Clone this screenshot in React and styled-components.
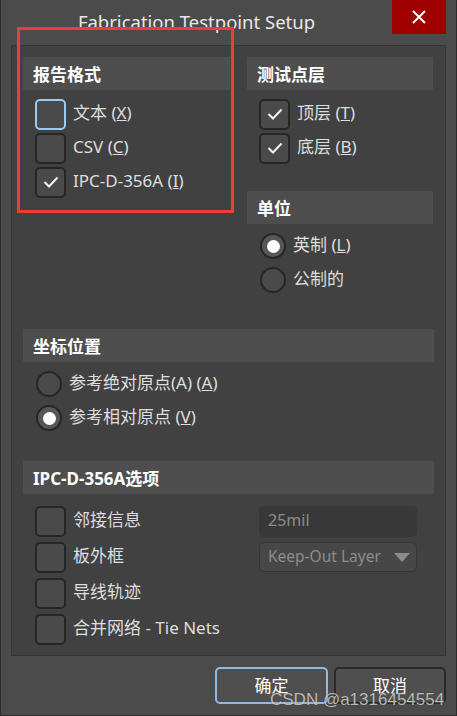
import styled, { createGlobalStyle } from "styled-components";

const GlobalStyle = createGlobalStyle`
  html, body {
    margin: 0;
    padding: 0;
    background: #4b4b4b;
  }
  body {
    font-family: "Noto Sans", "Noto Sans CJK SC", sans-serif;
  }
`;

const Window = styled.div`
  position: relative;
  width: 457px;
  height: 716px;
  box-sizing: border-box;
  background: #4b4b4b;
  border: 1px solid #2c2c2c;
  border-top: none;
  display: flex;
  flex-direction: column;
  overflow: hidden;
`;

const TitleBar = styled.div`
  height: 45px;
  display: flex;
  align-items: flex-start;
  padding-right: 10px;
`;

const Title = styled.div`
  flex: 1;
  text-align: center;
  color: #e8e8e8;
  font-size: 18.5px;
  line-height: 1;
  padding-top: 13px;
`;

const CloseButton = styled.div`
  width: 54px;
  height: 34px;
  background: #a00000;
  display: flex;
  align-items: center;
  justify-content: center;
`;

const Panel = styled.div`
  margin: 0 10px;
  height: 611px;
  box-sizing: border-box;
  background: #414141;
  border: 1px solid #363636;
  padding: 11px 11px 0;
  overflow: hidden;
`;

const TopGrid = styled.div`
  display: grid;
  grid-template-columns: 207px 186px;
  column-gap: 17px;
  align-items: start;
`;

const Column = styled.div`
  display: flex;
  flex-direction: column;
`;

const SectionHeader = styled.div`
  height: 33px;
  background: #4e4e4e;
  color: #ffffff;
  font-weight: 700;
  font-size: 17px;
  display: flex;
  align-items: center;
  padding-left: 10px;
  margin-top: ${(p) => p.$top || 0}px;
`;

const List = styled.div`
  display: flex;
  flex-direction: column;
  padding-top: ${(p) => p.$pad || 0}px;
`;

const Row = styled.div`
  height: ${(p) => p.$h || 34}px;
  display: flex;
  align-items: center;
  padding-left: 12px;
  gap: 7px;
  color: #dedede;
  font-size: 17px;
  white-space: nowrap;
`;

const Label = styled.span`
  line-height: 1;
  padding-bottom: 3px;
`;

const Box = styled.div`
  width: 31px;
  height: 31px;
  box-sizing: border-box;
  border-radius: 5px;
  border: 2px solid ${(p) => (p.$focus ? "#9ccaf2" : "#262626")};
  background: #4a4a4a;
  display: flex;
  align-items: center;
  justify-content: center;
  flex-shrink: 0;
`;

const Radio = styled.div`
  width: 26px;
  height: 26px;
  margin-left: 1px;
  box-sizing: border-box;
  border-radius: 50%;
  border: 2px solid #262626;
  background: ${(p) => (p.$on ? "#575757" : "#4a4a4a")};
  display: flex;
  align-items: center;
  justify-content: center;
  flex-shrink: 0;

  &::after {
    content: "";
    display: ${(p) => (p.$on ? "block" : "none")};
    width: 13px;
    height: 13px;
    border-radius: 50%;
    background: #ffffff;
  }
`;

const IpcGrid = styled.div`
  display: grid;
  grid-template-columns: 236px 158px;
  padding-top: 9px;
`;

const FieldCell = styled.div`
  height: 36px;
  display: flex;
  align-items: center;
`;

const TextField = styled.div`
  width: 158px;
  height: 31px;
  box-sizing: border-box;
  border-radius: 5px;
  background: #383838;
  color: #8c8c8c;
  font-size: 16px;
  display: flex;
  align-items: center;
  padding: 0 0 2px 9px;
`;

const SelectField = styled.div`
  width: 158px;
  height: 30px;
  box-sizing: border-box;
  border-radius: 5px;
  border: 1px solid #363636;
  background: #474747;
  color: #8c8c8c;
  font-size: 15.5px;
  display: flex;
  align-items: center;
  justify-content: space-between;
  padding: 0 6px 2px 8px;
  white-space: nowrap;
`;

const Caret = styled.span`
  width: 0;
  height: 0;
  margin-top: 2px;
  border-left: 8px solid transparent;
  border-right: 8px solid transparent;
  border-top: 9px solid #8c8c8c;
`;

const Footer = styled.div`
  flex: 1;
  display: flex;
  justify-content: flex-end;
  align-items: flex-start;
  gap: 6px;
  padding: 11px 10px 0;
`;

const Button = styled.div`
  width: ${(p) => p.$w}px;
  height: 37px;
  box-sizing: border-box;
  border-radius: 5px;
  border: 2px solid ${(p) => (p.$focus ? "#8fbbe6" : "#2a2a2a")};
  background: #4f4f4f;
  color: #ffffff;
  font-size: 17px;
  display: flex;
  align-items: center;
  justify-content: center;
  padding-bottom: 2px;
`;

const Annotation = styled.div`
  position: absolute;
  left: 16px;
  top: 27px;
  width: 217px;
  height: 186px;
  box-sizing: border-box;
  border: 3px solid #f23a3a;
  pointer-events: none;
`;

const Watermark = styled.div`
  position: absolute;
  left: 269px;
  top: 691px;
  font-family: "Liberation Sans", Arial, sans-serif;
  font-size: 17px;
  line-height: 1;
  color: rgba(235, 235, 235, 0.75);
  text-shadow: 0 0 1px rgba(0, 0, 0, 0.5);
  white-space: nowrap;
`;

const Check = () => (
  <svg width="16" height="12" viewBox="0 0 16 12">
    <polyline
      points="1.5,6 6,10.5 14.5,1.5"
      fill="none"
      stroke="#f2f2f2"
      strokeWidth="2"
    />
  </svg>
);

const CheckItem = ({ checked, focus, h, children }) => (
  <Row $h={h}>
    <Box $focus={focus}>{checked && <Check />}</Box>
    <Label>{children}</Label>
  </Row>
);

const RadioItem = ({ on, children }) => (
  <Row>
    <Radio $on={on} />
    <Label>{children}</Label>
  </Row>
);

export default function App() {
  return (
    <>
      <GlobalStyle />
      <Window>
        <TitleBar>
          <Title>Fabrication Testpoint Setup</Title>
          <CloseButton>
            <svg width="14" height="14" viewBox="0 0 14 14">
              <path d="M1 1 L13 13 M13 1 L1 13" stroke="#ffffff" strokeWidth="2" />
            </svg>
          </CloseButton>
        </TitleBar>

        <Panel>
          <TopGrid>
            <Column>
              <SectionHeader>报告格式</SectionHeader>
              <List $pad={7}>
                <CheckItem focus>
                  文本 (<u>X</u>)
                </CheckItem>
                <CheckItem>
                  CSV (<u>C</u>)
                </CheckItem>
                <CheckItem checked>
                  IPC-D-356A (<u>I</u>)
                </CheckItem>
              </List>
            </Column>
            <Column>
              <SectionHeader>测试点层</SectionHeader>
              <List $pad={7}>
                <CheckItem checked>
                  顶层 (<u>T</u>)
                </CheckItem>
                <CheckItem checked>
                  底层 (<u>B</u>)
                </CheckItem>
              </List>
              <SectionHeader $top={26}>单位</SectionHeader>
              <List $pad={5}>
                <RadioItem on>
                  英制 (<u>L</u>)
                </RadioItem>
                <RadioItem>
                  公制的
                </RadioItem>
              </List>
            </Column>
          </TopGrid>

          <SectionHeader $top={32}>坐标位置</SectionHeader>
          <List $pad={5}>
            <RadioItem>
              参考绝对原点(A) (<u>A</u>)
            </RadioItem>
            <RadioItem on>
              参考相对原点 (<u>V</u>)
            </RadioItem>
          </List>

          <SectionHeader $top={26}>IPC-D-356A选项</SectionHeader>
          <IpcGrid>
            <CheckItem h={36}>邻接信息</CheckItem>
            <FieldCell>
              <TextField>25mil</TextField>
            </FieldCell>
            <CheckItem h={36}>板外框</CheckItem>
            <FieldCell>
              <SelectField>
                Keep-Out Layer
                <Caret />
              </SelectField>
            </FieldCell>
            <CheckItem h={36}>导线轨迹</CheckItem>
            <FieldCell />
            <CheckItem h={36}>合并网络 - Tie Nets</CheckItem>
            <FieldCell />
          </IpcGrid>
        </Panel>

        <Footer>
          <Button $w={113} $focus>
            确定
          </Button>
          <Button $w={112}>取消</Button>
        </Footer>

        <Annotation />
        <Watermark>CSDN @a1316454554</Watermark>
      </Window>
    </>
  );
}
